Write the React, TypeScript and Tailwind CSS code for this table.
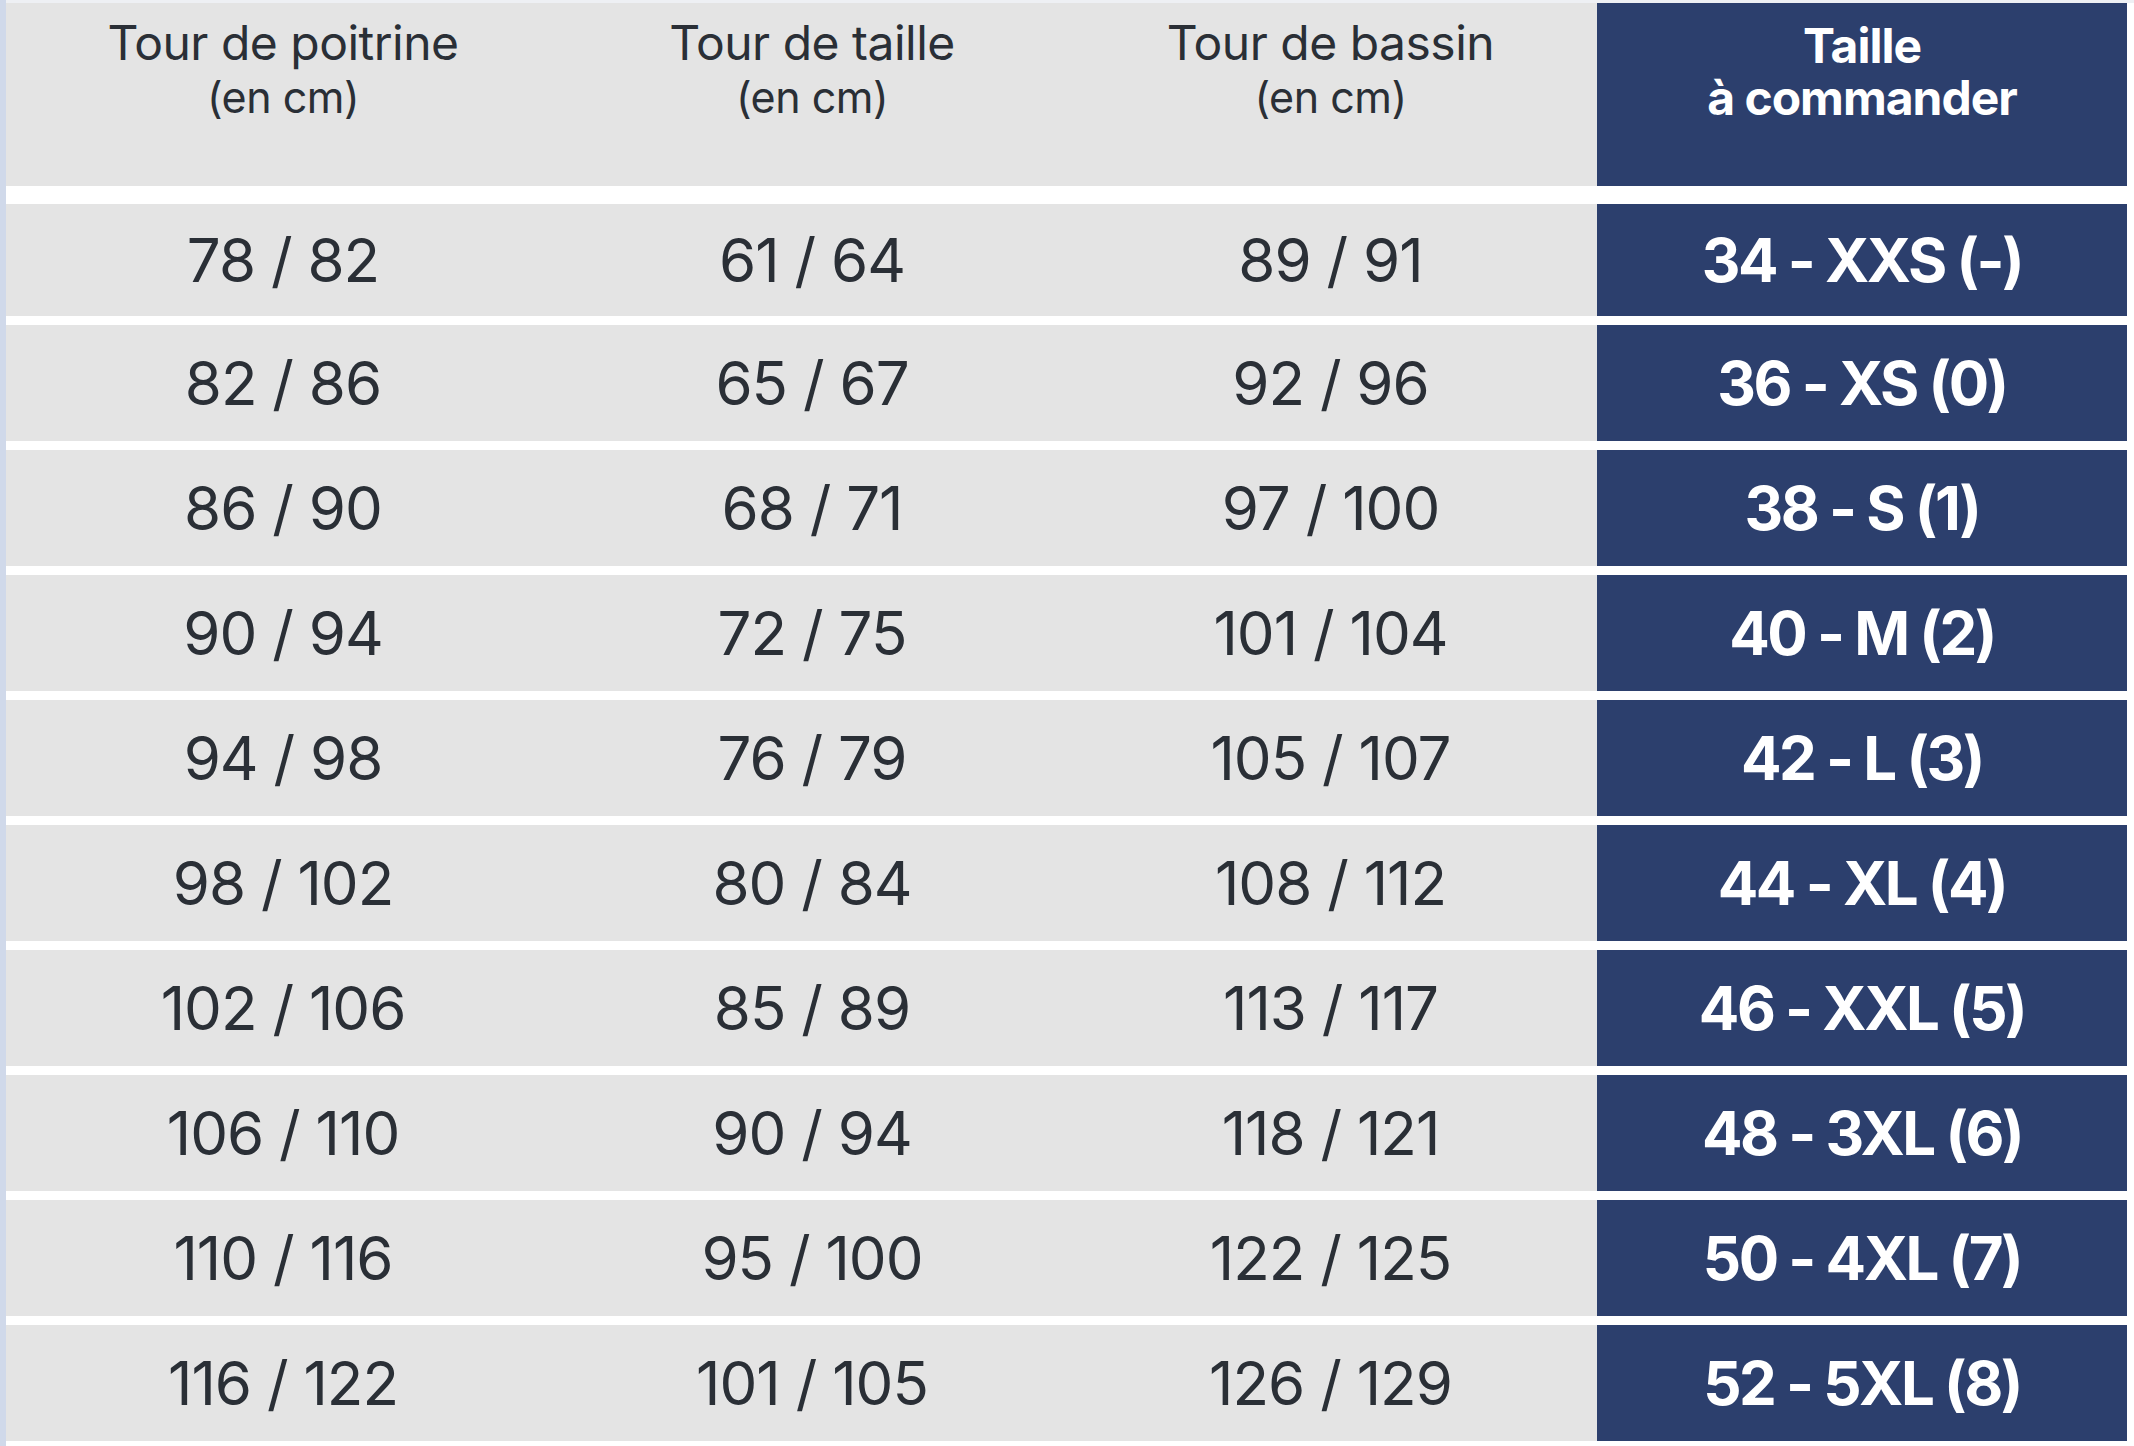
import React from 'react'

const rows = [
  ['78 / 82', '61 / 64', '89 / 91', '34 - XXS (-)'],
  ['82 / 86', '65 / 67', '92 / 96', '36 - XS (0)'],
  ['86 / 90', '68 / 71', '97 / 100', '38 - S (1)'],
  ['90 / 94', '72 / 75', '101 / 104', '40 - M (2)'],
  ['94 / 98', '76 / 79', '105 / 107', '42 - L (3)'],
  ['98 / 102', '80 / 84', '108 / 112', '44 - XL (4)'],
  ['102 / 106', '85 / 89', '113 / 117', '46 - XXL (5)'],
  ['106 / 110', '90 / 94', '118 / 121', '48 - 3XL (6)'],
  ['110 / 116', '95 / 100', '122 / 125', '50 - 4XL (7)'],
  ['116 / 122', '101 / 105', '126 / 129', '52 - 5XL (8)'],
]

const headers = ['Tour de poitrine', 'Tour de taille', 'Tour de bassin']

export default function App() {
  return (
    <div
      className="w-[2134px] h-[1446px] overflow-hidden bg-white flex"
      style={{ fontFamily: 'Inter, "Liberation Sans", sans-serif' }}
    >
      {/* left edge strip */}
      <div className="w-[6px] bg-[#d0d9ea] shrink-0" />

      <div className="flex-1 flex flex-col pr-[7px]">
        <div className="h-[3px] bg-[#eef0f4] -mr-[7px]" />

        {/* header */}
        <div className="grid grid-cols-[554px_504px_533px_530px] h-[183px]">
          {headers.map(h => (
            <div key={h} className="bg-[#e4e4e4] flex flex-col items-center pt-[11px] text-[#2a2f36]">
              <span className="text-[48px] leading-[58px] tracking-[-0.5px]">{h}</span>
              <span className="text-[43px] leading-[50px] tracking-[-0.5px]">(en cm)</span>
            </div>
          ))}
          <div className="bg-[#2c3f6d] flex justify-center pt-[17px] text-white font-bold">
            <p className="text-center text-[48px] leading-[52px] tracking-[-1px]">
              Taille
              <br />
              à commander
            </p>
          </div>
        </div>

        {/* rows */}
        <div className="flex flex-col gap-[8.5px] mt-[18px]">
          {rows.map((r, ri) => (
            <div
              key={r[3]}
              className={`grid grid-cols-[554px_504px_533px_530px] shrink-0 ${ri === 0 ? 'h-[112px]' : 'h-[116.5px]'}`}
            >
              {r.slice(0, 3).map((v, i) => (
                <div key={i} className="bg-[#e4e4e4] flex items-center justify-center text-[#2a2f36] text-[60px] tracking-[-1px]">
                  {v}
                </div>
              ))}
              <div className="bg-[#2c3f6d] flex items-center justify-center text-white font-bold text-[60px] tracking-[-2.5px]">
                {r[3]}
              </div>
            </div>
          ))}
        </div>
      </div>
    </div>
  )
}
